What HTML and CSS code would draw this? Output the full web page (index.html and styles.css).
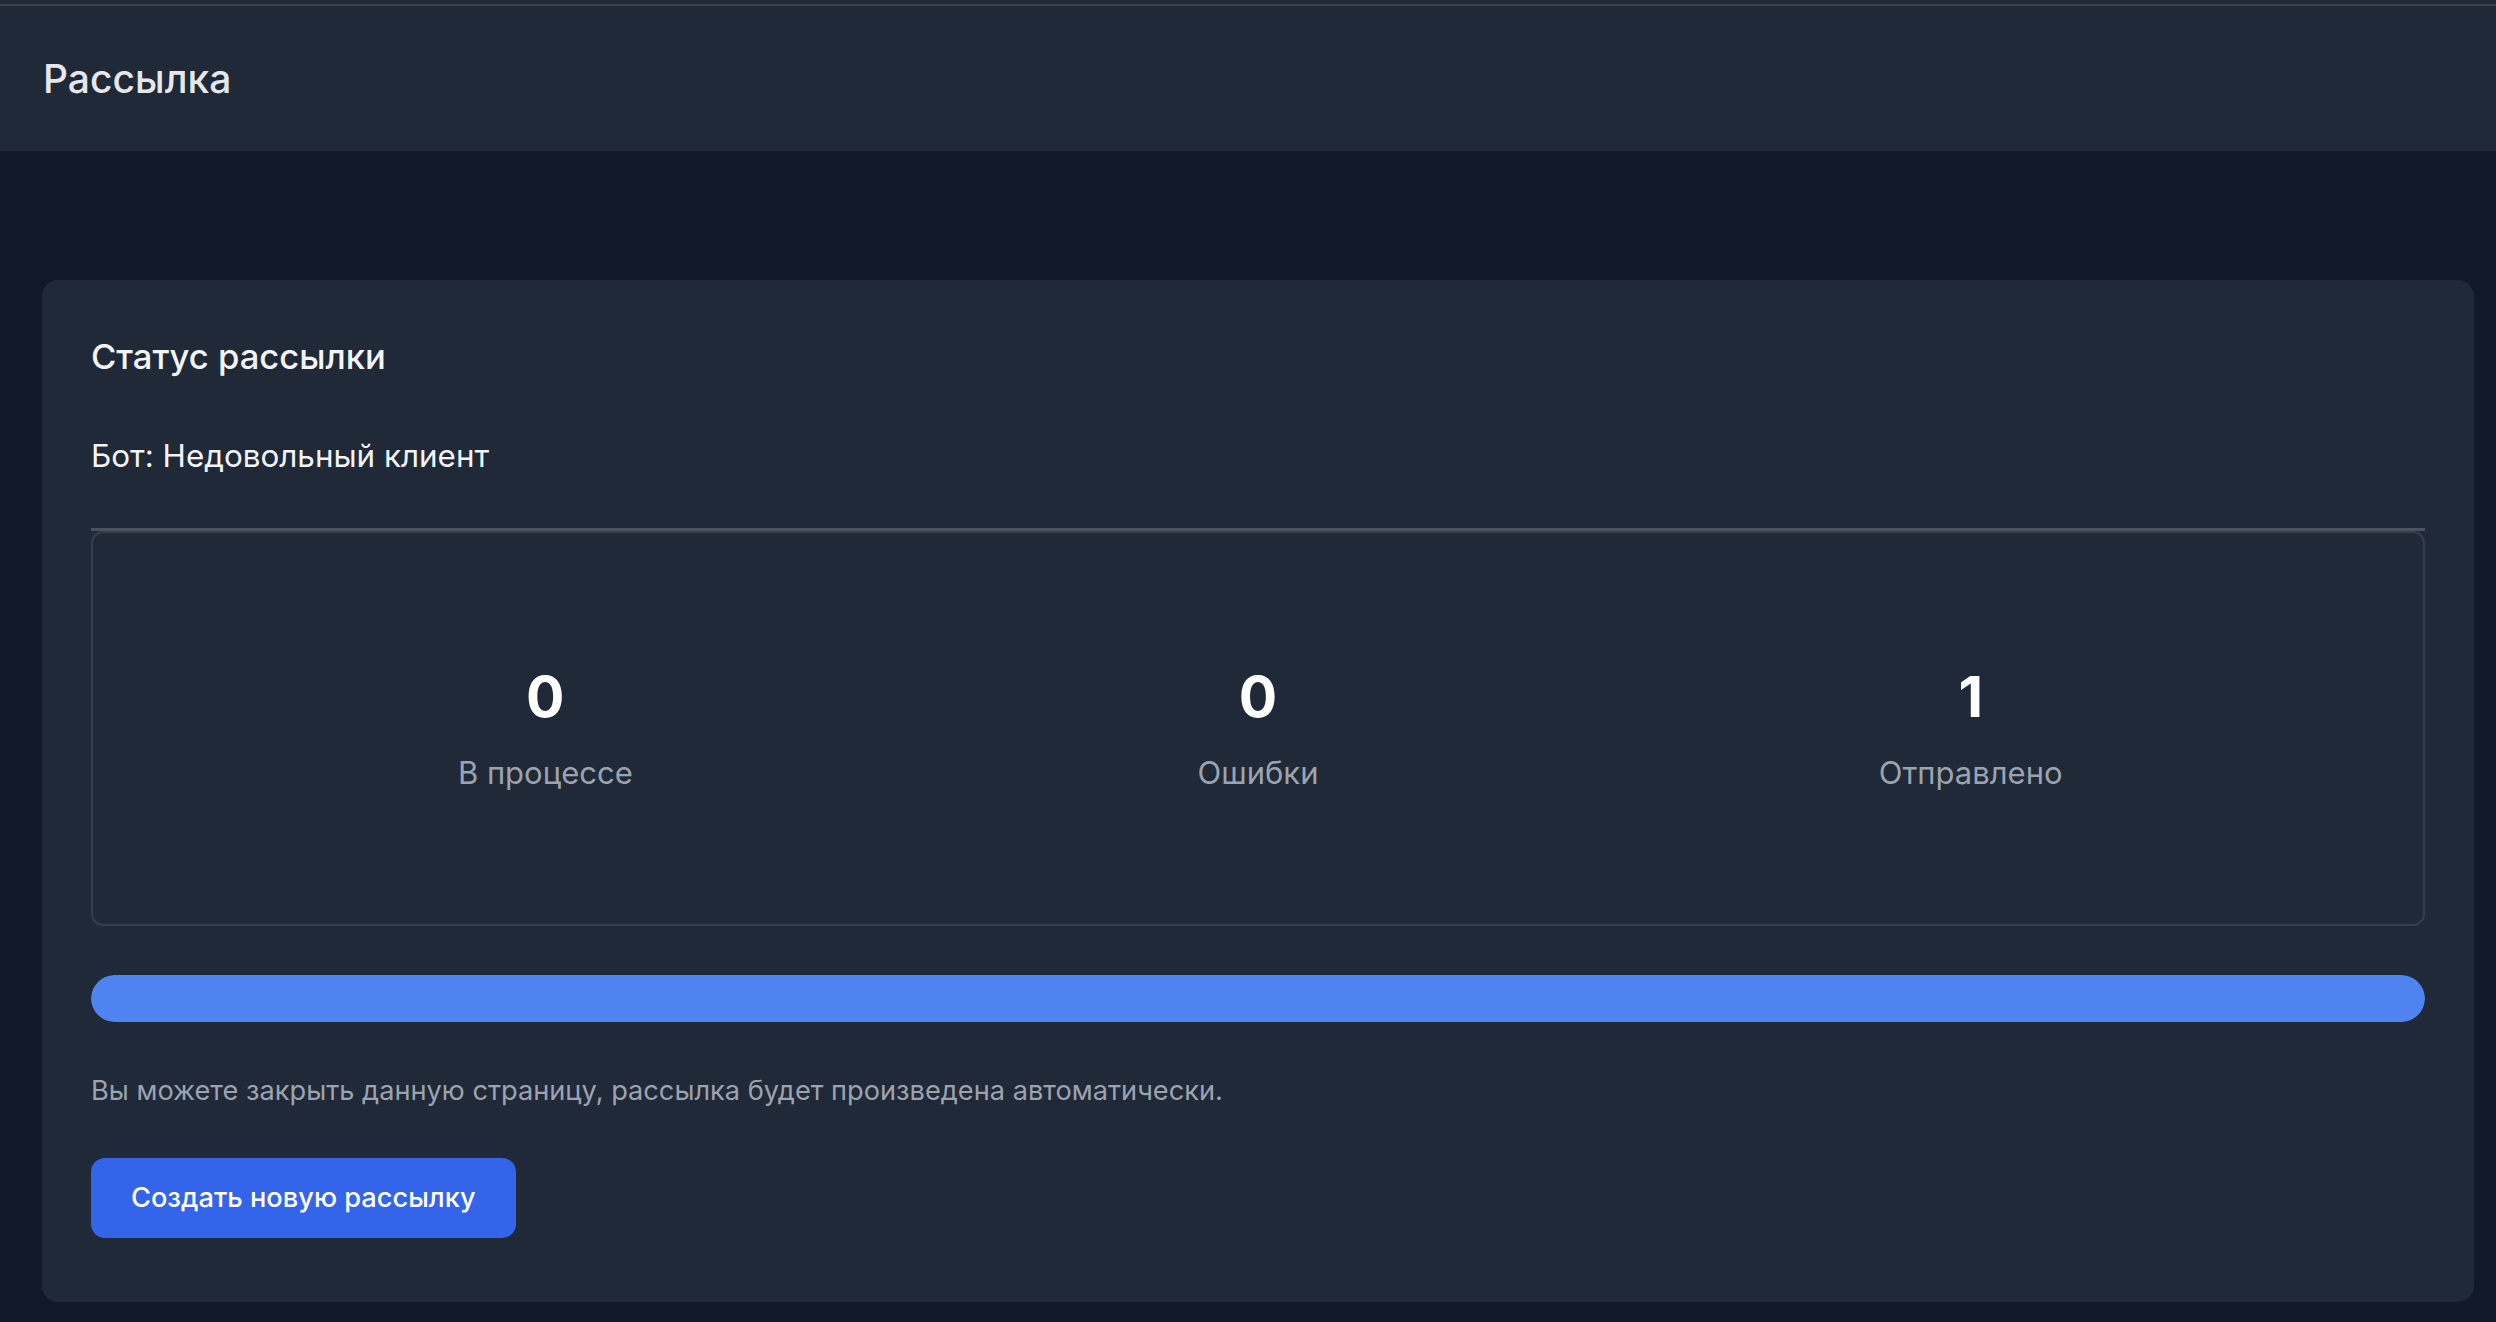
FILE: index.html
```html
<!DOCTYPE html>
<html lang="ru">
<head>
  <meta charset="UTF-8">
  <meta name="viewport" content="width=device-width, initial-scale=1.0">
  <title>Рассылка</title>
  <link rel="stylesheet" href="styles.css">
</head>
<body>
  <header class="header">
    <h1 class="page-title">Рассылка</h1>
  </header>

  <main class="main">
    <section class="card">
      <h2 class="card-title">Статус рассылки</h2>
      <p class="bot-name">Бот: Недовольный клиент</p>

      <!-- counters -->
      <div class="stats-wrap">
        <div class="stats">
          <div class="stat">
            <div class="stat-value">0</div>
            <div class="stat-label">В процессе</div>
          </div>
          <div class="stat">
            <div class="stat-value">0</div>
            <div class="stat-label">Ошибки</div>
          </div>
          <div class="stat">
            <div class="stat-value">1</div>
            <div class="stat-label">Отправлено</div>
          </div>
        </div>
      </div>

      <div class="progress">
        <div class="progress-fill" style="width: 100%;"></div>
      </div>

      <p class="hint">Вы можете закрыть данную страницу, рассылка будет произведена автоматически.</p>

      <button class="btn">Создать новую рассылку</button>
    </section>
  </main>
</body>
</html>
```

FILE: styles.css
```css
* {
  box-sizing: border-box;
}

body {
  margin: 0;
  font-family: Inter, "Noto Sans", sans-serif;
  background-color: #111827;
  color: #f3f4f6;
  min-height: 100vh;
}

.header {
  background-color: #1f2937;
  padding: 50px 43px 43px;
  /* thin line near the top edge */
  box-shadow: inset 0 4px 0 #1f2937, inset 0 6px 0 #3a4250;
}

.page-title {
  margin: 0;
  font-size: 39px;
  line-height: 58px;
  font-weight: 500;
  color: #e5e7eb;
}

.main {
  padding: 129px 22px 21px 42px;
}

.card {
  background-color: #1f2937;
  border-radius: 16px;
  padding: 50px 49px 64px;
}

.card-title {
  margin: 0;
  font-size: 34.6px;
  line-height: 52px;
  font-weight: 500;
  color: #f3f4f6;
}

.bot-name {
  margin: 52px 0 0;
  font-size: 31.4px;
  line-height: 45px;
  font-weight: 400;
  color: #f3f4f6;
}

.stats-wrap {
  margin-top: 49px;
  border-top: 3px solid #4b5260;
}

.stats {
  display: grid;
  grid-template-columns: repeat(3, 1fr);
  padding: 130px 96px 128px;
  border: 2px solid #363e4c;
  border-radius: 12px;
}

.stat {
  text-align: center;
}

.stat-value {
  font-size: 57px;
  line-height: 68px;
  font-weight: 700;
  color: #ffffff;
}

.stat-label {
  margin-top: 19px;
  font-size: 31px;
  line-height: 46px;
  color: #9ca3af;
}

.progress {
  margin-top: 49px;
  height: 47px;
  border-radius: 24px;
  background-color: #374151;
  overflow: hidden;
}

.progress-fill {
  height: 100%;
  background-color: #4f83f0;
  border-radius: 24px;
}

.hint {
  margin: 48px 0 0;
  font-size: 27.2px;
  line-height: 42px;
  color: #9ca3af;
}

.btn {
  margin-top: 46px;
  padding: 19px 40px;
  font-family: inherit;
  font-size: 27.2px;
  line-height: 42px;
  font-weight: 500;
  color: #ffffff;
  background-color: #3464e9;
  border: none;
  border-radius: 14px;
  cursor: pointer;
}

.btn:hover {
  background-color: #2a55d4;
}
```
